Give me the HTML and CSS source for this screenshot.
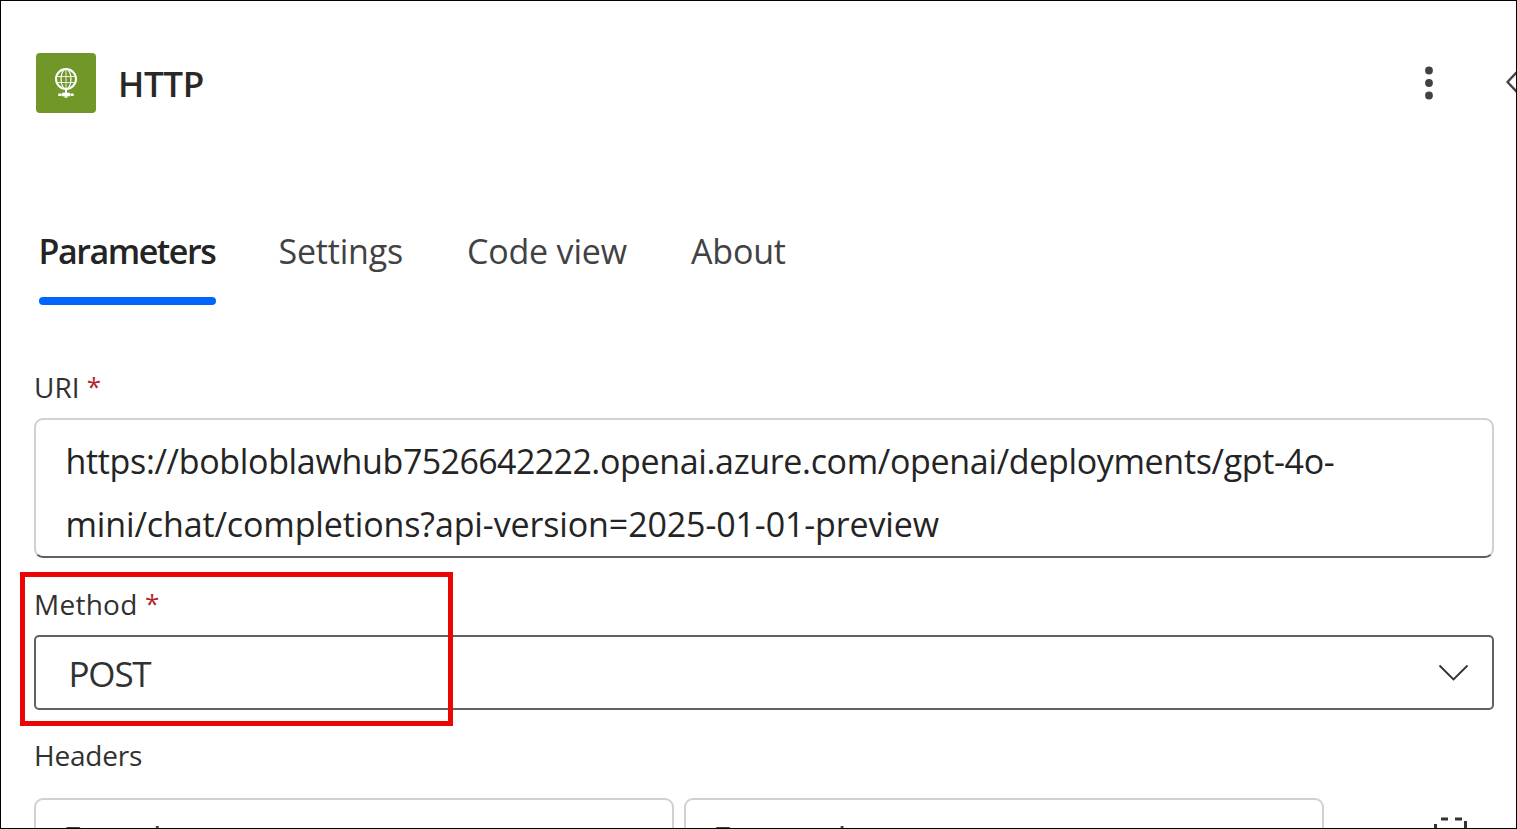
FILE: index.html
```html
<!DOCTYPE html>
<html lang="en">
<head>
<meta charset="utf-8">
<title>HTTP</title>
<link rel="stylesheet" href="styles.css">
</head>
<body>
<main class="panel">
  <header class="header">
    <div class="app-icon">
      <svg width="60" height="60" viewBox="0 0 60 60" fill="none" stroke="#fff">
        <circle cx="30" cy="26" r="10" stroke-width="2"/>
        <ellipse cx="30" cy="26" rx="5" ry="10" stroke-width="1.200"/>
        <path d="M20 23.500h20M21 29.500h18M30 16v20" stroke-width="1" opacity=".85"/>
        <path d="M30 36v4" stroke-width="2"/>
        <path d="M26 41.500h8" stroke-width="3.600"/>
        <path d="M22.300 41.800h3M34.700 41.800h3" stroke-width="2.400"/>
        <path d="M25 41.700h10" stroke-width="1"/>
        <path d="M28.500 44h3" stroke-width="1.500"/>
      </svg>
    </div>
    <h1 class="title">HTTP</h1>
    <div class="actions">
      <svg class="more" width="10" height="36" viewBox="0 0 10 36" fill="#424242">
        <circle cx="5" cy="5.500" r="3.900"/><circle cx="5" cy="18" r="3.900"/><circle cx="5" cy="30.500" r="3.900"/>
      </svg>
      <svg class="collapse" width="12" height="24" viewBox="0 0 12 24" fill="none" stroke="#424242" stroke-width="2.400" stroke-linejoin="round">
        <path d="M13.500 0.500L3.500 11l10 10.500"/>
      </svg>
    </div>
  </header>

  <nav class="tabs">
    <a class="tab active">Parameters</a>
    <a class="tab settings">Settings</a>
    <a class="tab code">Code view</a>
    <a class="tab about">About</a>
  </nav>

  <section class="form">
    <div class="label uri-label">URI <span class="required">*</span></div>
    <div class="uri-box">
      <div class="uri-first">https://bobloblawhub<span class="digits">7526642222</span>.openai.azure.com/openai/deployments/gpt-4o-</div>
      <div class="uri-second">mini/chat/completions?api-version=2025-01-01-preview</div>
    </div>
    <div class="label method-label">Method <span class="required">*</span></div>
    <div class="select">
      <span class="select-value">POST</span>
      <svg width="32" height="20" viewBox="0 0 32 20" fill="none" stroke="#323130" stroke-width="1.800"><path d="M2.500 1.500L16.500 15.500l14-14"/></svg>
    </div>
    <div class="label headers-label">Headers</div>
    <div class="header-row">
      <div class="cell">Enter key</div>
      <div class="cell">Enter value</div>
      <svg class="mode" width="36" height="36" viewBox="0 0 36 36" fill="none" stroke="#333" stroke-width="3">
        <path d="M8 3h7M22 3h7M2.500 8v7M32.500 5v9"/>
      </svg>
    </div>
  </section>
  <div class="callout"></div>
</main>
</body>
</html>
```
FILE: styles.css
```css
* { box-sizing: border-box; }
body { margin: 0; background: #fff; }
.panel {
  position: relative;
  width: 1517px;
  height: 829px;
  border: 1px solid #000;
  overflow: hidden;
  padding: 52px 0 0 33px;
  font-family: "Open Sans", "Noto Sans", sans-serif;
  color: #242424;
}
.header { display: flex; height: 60px; padding-left: 2px; align-items: center; }
.app-icon { width: 60px; height: 60px; border-radius: 4px; background: #709727; }
.app-icon svg { display: block; }
.title { margin: 1px 0 0 22px; font-size: 35px; line-height: 48px; font-weight: 600; color: #2b2726; letter-spacing: -0.4px; }
.actions { display: flex; align-items: center; margin-left: auto; gap: 70px; }
.tabs { display: flex; margin-top: 110px; height: 82px; padding-left: 5px; }
.tab { font-size: 34px; line-height: 57px; height: 82px; color: #424242; white-space: nowrap; letter-spacing: -0.2px; }
.tab.active { width: 177px; font-weight: 600; color: #242424; display: flex; flex-direction: column; letter-spacing: -1.450px; text-indent: -0.5px; }
.tab.active::after { content: ""; height: 8px; border-radius: 4px; background: #0064ff; margin-top: 17px; }
.settings { margin-left: 62.500px; width: 188.500px; }
.code { width: 224px; }
.label { font-size: 28px; line-height: 40px; color: #323130; white-space: nowrap; }
.required { color: #b1262e; font-size: 26px; line-height: 1; vertical-align: 2px; }
.uri-label { padding-top: 62px; height: 113px; }
.uri-box { width: 1460px; height: 140px; border: 2px solid #d1d1d1; border-bottom-color: #616161; border-radius: 9px; padding: 10px 29.500px; font-size: 34px; line-height: 63px; white-space: nowrap; }
.uri-first { letter-spacing: -0.340px; }
.digits { letter-spacing: -0.600px; }
.uri-second { letter-spacing: -0.125px; }
.method-label { padding-top: 26px; height: 77px; letter-spacing: 0.25px; }
.select { width: 1460px; height: 75px; border: 2px solid #616161; border-radius: 5px; display: flex; justify-content: space-between; align-items: center; padding: 2px 23px 0 32.500px; }
.select-value { font-size: 35px; color: #323130; letter-spacing: -1.200px; }
.headers-label { padding-top: 25px; height: 88px; letter-spacing: -0.200px; }
.header-row { display: flex; gap: 10px; }
.cell { width: 640px; height: 80px; border: 2px solid #d1d1d1; border-radius: 9px; padding: 14px 27px; font-size: 34px; line-height: 50px; color: #424242; letter-spacing: -0.6px; }
.mode { margin: 18px 0 0 99px; }
.callout { position: absolute; left: 19px; top: 571px; width: 433px; height: 154px; border: 5px solid #eb0505; }
```
